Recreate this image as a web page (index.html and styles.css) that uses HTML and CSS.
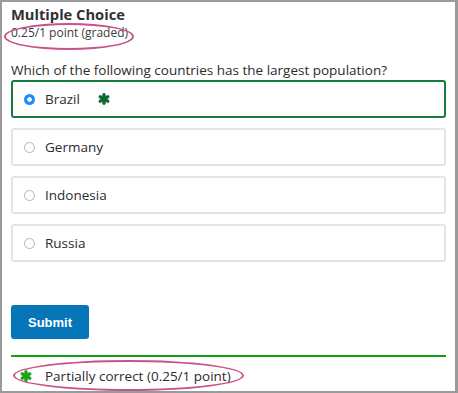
FILE: index.html
```html
<!DOCTYPE html>
<html>
<head>
<meta charset="utf-8">
<link rel="stylesheet" href="styles.css">
</head>
<body>
<div class="frame">
  <h2 class="title">Multiple Choice</h2>
  <div class="points">0.25/1 point (graded)</div>
  <p class="question">Which of the following countries has the largest population?</p>
  <div class="options">
    <label class="option selected">
      <span class="radio checked"></span>
      <span class="label">Brazil</span>
      <svg class="star star-dark" viewBox="0 0 12 12" width="12" height="12"><g stroke="currentColor" stroke-width="3.4" stroke-linecap="round"><line x1="6" y1="1.7" x2="6" y2="10.3"/><line x1="2.3" y1="3.85" x2="9.7" y2="8.15"/><line x1="2.3" y1="8.15" x2="9.7" y2="3.85"/></g></svg>
    </label>
    <label class="option">
      <span class="radio"></span>
      <span class="label">Germany</span>
    </label>
    <label class="option">
      <span class="radio"></span>
      <span class="label">Indonesia</span>
    </label>
    <label class="option">
      <span class="radio"></span>
      <span class="label">Russia</span>
    </label>
  </div>
  <button class="submit">Submit</button>
  <div class="feedback">
    <svg class="star star-bright" viewBox="0 0 12 12" width="12" height="12"><g stroke="currentColor" stroke-width="3.4" stroke-linecap="round"><line x1="6" y1="1.7" x2="6" y2="10.3"/><line x1="2.3" y1="3.85" x2="9.7" y2="8.15"/><line x1="2.3" y1="8.15" x2="9.7" y2="3.85"/></g></svg>
    <span class="feedback-text">Partially correct (0.25/1 point)</span>
  </div>
  <div class="ring ring-points"></div>
  <div class="ring ring-feedback"></div>
</div>
</body>
</html>
```
FILE: styles.css
```css
html, body {
  margin: 0;
  padding: 0;
  background: #ffffff;
}
.frame {
  position: relative;
  width: 458px;
  height: 393px;
  box-sizing: border-box;
  border-style: solid;
  border-color: #9b9b9b;
  border-width: 2px 3px 2px 2px;
  padding: 2px 9px 0 9px;
  font-family: "Open Sans", "DejaVu Sans", sans-serif;
  color: #333333;
  background: #ffffff;
  overflow: hidden;
}
.title {
  margin: 0;
  font-size: 14.7px;
  line-height: 20px;
  font-weight: 700;
  color: #313131;
}
.points {
  font-size: 12px;
  line-height: 18px;
  color: #3c3c3c;
}
.question {
  margin: 19px 0 0 0;
  font-size: 13.5px;
  line-height: 19px;
  color: #2b2b2b;
}
.options {
  display: flex;
  flex-direction: column;
  gap: 10px;
}
.option {
  display: flex;
  align-items: center;
  height: 38px;
  box-sizing: border-box;
  border: 2px solid #e4e4e4;
  border-radius: 3px;
  padding: 0 11px;
  font-size: 13.5px;
  color: #2b2b2b;
}
.option.selected {
  border-color: #167c3e;
}
.radio {
  width: 11px;
  height: 11px;
  box-sizing: border-box;
  border: 1px solid #b4b4b4;
  border-radius: 50%;
  background: #ffffff;
  margin-right: 10px;
  flex: none;
}
.radio.checked {
  border: none;
  background: radial-gradient(circle, #ffffff 0 2px, #1a8cff 2.5px);
}
.star {
  width: 12px;
  height: 12px;
  flex: none;
}
.star-dark {
  color: #0b6b35;
  margin-left: 18px;
}
.star-bright {
  color: #1aa41a;
  margin-left: 9px;
  margin-right: 13px;
}
.submit {
  display: block;
  margin-top: 43px;
  width: 78px;
  height: 34px;
  border: none;
  border-radius: 3px;
  background: #0776b8;
  color: #ffffff;
  font-family: "Liberation Sans", Arial, sans-serif;
  font-weight: 700;
  font-size: 13px;
  padding: 0;
}
.feedback {
  margin-top: 16px;
  border-top: 2px solid #13a013;
  display: flex;
  align-items: center;
  padding-top: 10px;
  font-size: 13.5px;
  color: #2b2b2b;
}
.ring {
  position: absolute;
  box-sizing: border-box;
  border: 2px solid #c9528c;
  border-radius: 50%;
}
.ring-points {
  left: 2px;
  top: 21px;
  width: 130px;
  height: 27px;
}
.ring-feedback {
  left: 11px;
  top: 358px;
  width: 231px;
  height: 31px;
}
```
